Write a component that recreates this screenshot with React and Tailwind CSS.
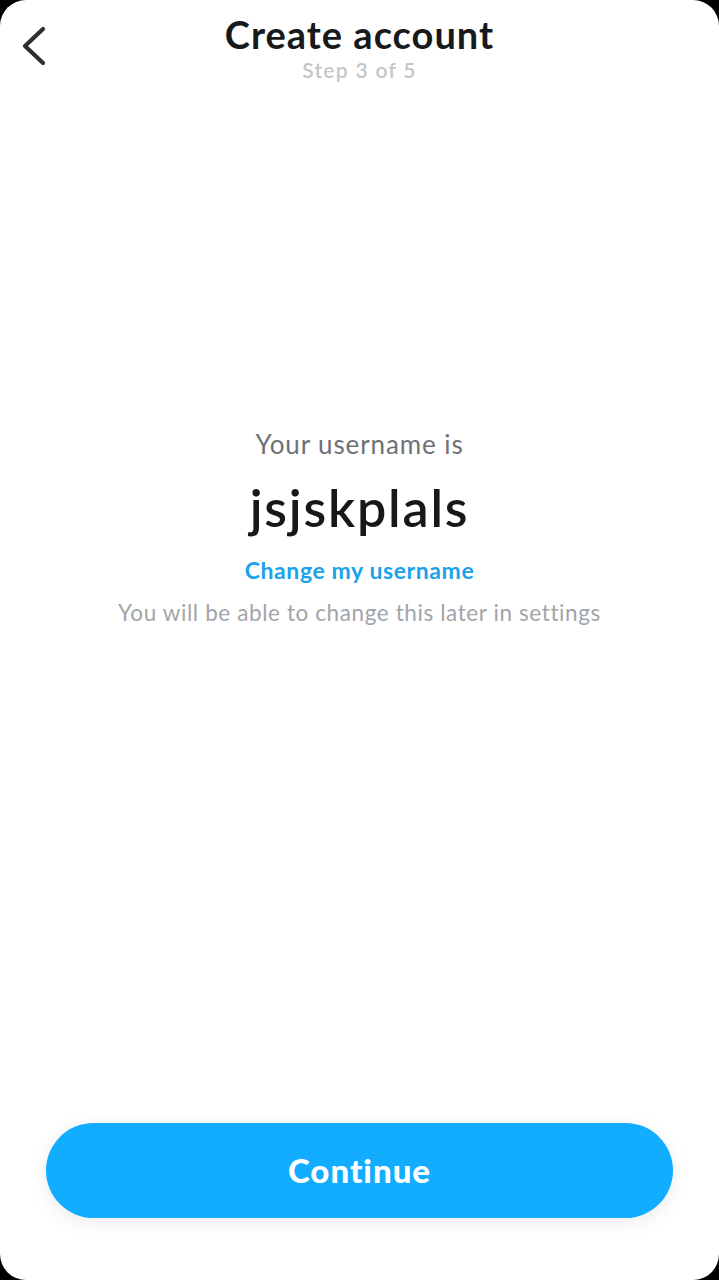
import React from "react";

function BackChevron() {
  return (
    <svg width="28" height="48" viewBox="0 0 28 48" fill="none">
      <path d="M23 9 L5 26 L23 43" stroke="#2b2e33" strokeWidth="4.2" strokeLinecap="round" strokeLinejoin="round" />
    </svg>
  );
}

export default function App() {
  return (
    <div className="bg-black h-[1280px] w-full" style={{ fontFamily: "Lato, 'Noto Sans', sans-serif" }}>
      <div className="bg-white rounded-[26px] h-full flex flex-col">
        <div className="grid grid-cols-[70px_1fr_70px] pt-[9px]">
          <div className="pl-[20px] pt-[11px]">
            <BackChevron />
          </div>
          <div className="flex flex-col items-center">
            <h1 className="text-[38px] leading-[50px] font-bold text-[#17191c] tracking-[1px]">Create account</h1>
            <p className="mt-[1px] text-[21px] leading-[20px] font-semibold text-[#c3c6ca] tracking-[1.3px]">Step 3 of 5</p>
          </div>
          <div />
        </div>

        <div className="flex-1 flex flex-col items-center pt-[349px]">
          <p className="text-[26px] leading-[30px] text-[#6d7277] tracking-[0.9px]">Your username is</p>
          <p className="mt-[20px] text-[52px] leading-[56px] font-semibold text-[#16191c] tracking-[1.8px]">jsjskplals</p>
          <button className="mt-[21px] text-[23px] leading-[28px] font-bold text-[#1aa3ea] tracking-[0.6px]">Change my username</button>
          <p className="mt-[15px] text-[22.5px] leading-[28px] text-[#a1a5a9] tracking-[0.6px]">You will be able to change this later in settings</p>
        </div>

        <div className="px-[46px] pb-[62px]">
          <button className="w-full h-[95px] rounded-full bg-[#12adff] text-white text-[33px] font-black tracking-[1px] shadow-[0_4px_20px_rgba(0,0,0,0.08)]">
            Continue
          </button>
        </div>
      </div>
    </div>
  );
}
